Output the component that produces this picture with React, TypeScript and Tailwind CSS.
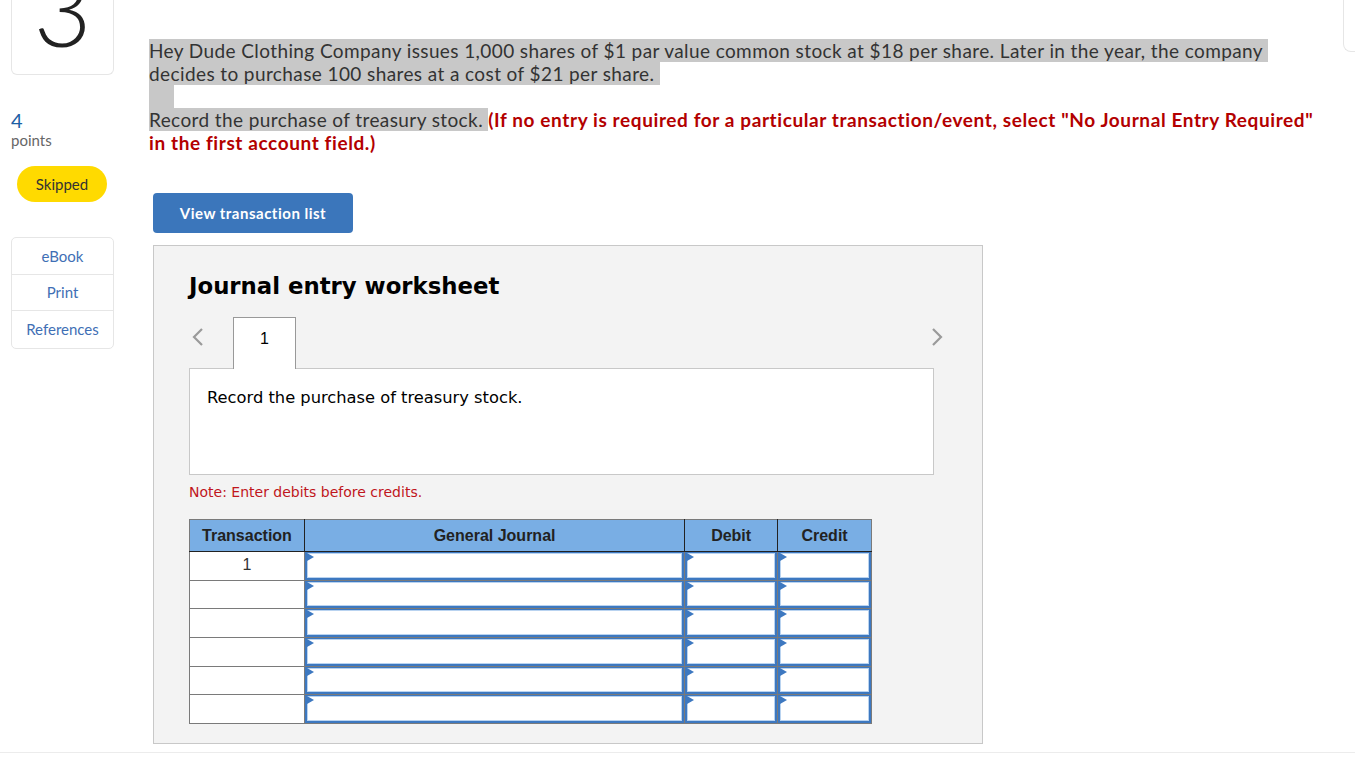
const rows = [1, 2, 3, 4, 5, 6];

function Chevron({ dir }: { dir: "left" | "right" }) {
  return (
    <svg width="14" height="20" viewBox="0 0 14 20" className="text-[#9a9a9a]">
      <polyline
        points={dir === "left" ? "11,2 3,10 11,18" : "3,2 11,10 3,18"}
        fill="none"
        stroke="currentColor"
        strokeWidth="2.2"
      />
    </svg>
  );
}

function InputCell() {
  return (
    <td className="h-[28.67px] border border-[#7a7a7a] p-0">
      <div className="relative h-full border-2 border-t border-[#3d78c0] bg-white shadow-[inset_0_0_0_1px_#b9d3f0]">
        <span className="absolute left-0 top-0 h-0 w-0 border-y-[4px] border-l-[7px] border-y-transparent border-l-[#3d78c0]" />
      </div>
    </td>
  );
}

export default function App() {
  return (
    <div className="h-[759px] w-[1355px] overflow-hidden bg-white font-['Lato',sans-serif] text-[#333]">
      <div className="flex">
        <aside className="ml-[11px] flex w-[103px] shrink-0 flex-col">
          <div className="flex h-[75px] items-end justify-center overflow-hidden rounded-b-[6px] border border-t-0 border-[#e6e6e6] pb-[16px]">
            <span className="text-[100px] font-light leading-none text-[#222]">3</span>
          </div>
          <div className="mt-[34px] text-[20px] leading-[22px] text-[#1d5fa5]">4</div>
          <div className="text-[15px] leading-[18px] text-[#666]">points</div>
          <div className="ml-[6px] mt-[17px] flex h-[36px] w-[90px] items-center justify-center rounded-full bg-[#ffda00] text-[15px] text-[#333]">
            Skipped
          </div>
          <div className="mt-[35px] flex flex-col rounded-[5px] border border-[#e6e6e6] text-[15px] text-[#3f6fb5]">
            <div className="flex h-[37px] items-center justify-center border-b border-[#e6e6e6]">eBook</div>
            <div className="flex h-[36px] items-center justify-center border-b border-[#e6e6e6]">Print</div>
            <div className="flex h-[37px] items-center justify-center">References</div>
          </div>
        </aside>

        <main className="ml-[35px] w-[1194px] shrink-0 pt-[39px]">
          <p className="text-[19px] leading-[23px] tracking-[0.4px] text-[#333]">
            <span className="bg-[#c8c8c8]">
              Hey Dude Clothing Company issues 1,000 shares of $1 par value common stock at $18 per share. Later in the year, the company{"\u00a0"}
              <br />
              decides to purchase 100 shares at a cost of $21 per share.{"\u00a0"}
            </span>
          </p>
          <div className="h-[23px]">
            <span className="inline-block h-[23px] w-[25px] bg-[#c8c8c8]" />
          </div>
          <p className="text-[19px] leading-[23px] tracking-[0.4px]">
            <span className="bg-[#c8c8c8]">Record the purchase of treasury stock. </span>
            <span className="font-bold tracking-[0.6px] text-[#b30000]">
              (If no entry is required for a particular transaction/event, select "No Journal Entry Required"
              <br />
              in the first account field.)
            </span>
          </p>

          <button
            type="button"
            className="ml-[4px] mt-[39px] flex h-[40px] w-[200px] items-center justify-center rounded-[4px] bg-[#3b76bb] text-[15px] font-bold tracking-[0.5px] text-white"
          >
            View transaction list
          </button>

          <section className="ml-[4px] mt-[12px] w-[830px] border border-[#c8c8c8] bg-[#f3f3f3] pb-[19px] pl-[35px] pt-[26px]">
            <h2 className="font-['DejaVu_Sans',sans-serif] text-[22.8px] font-bold leading-[28px] text-black">
              Journal entry worksheet
            </h2>

            <div className="mt-[17px] flex h-[51px] w-[757px] items-center justify-between">
              <div className="flex h-full items-center">
                <span className="ml-[2px] mt-[-12px]">
                  <Chevron dir="left" />
                </span>
                <div className="relative z-10 ml-[28px] flex h-[52px] w-[63px] self-start justify-center border border-b-0 border-[#999] bg-white pt-[9px] font-['Liberation_Sans',sans-serif] text-[16px] text-black">
                  1
                </div>
              </div>
              <span className="mr-[2px] mt-[-12px]">
                <Chevron dir="right" />
              </span>
            </div>

            <div className="h-[107px] w-[745px] border border-[#c8c8c8] bg-white pl-[17px] pt-[17px] font-['DejaVu_Sans',sans-serif] text-[16.3px] text-black">
              Record the purchase of treasury stock.
            </div>

            <p className="mt-[8px] font-['DejaVu_Sans',sans-serif] text-[14px] leading-[18px] text-[#c0161c]">
              Note: Enter debits before credits.
            </p>

            <table className="mt-[18px] w-[683px] border-collapse border border-[#7a7a7a] font-['Liberation_Sans',sans-serif]">
              <thead>
                <tr className="h-[32px] bg-[#79aee4] text-[16px] font-bold text-[#222]">
                  <th className="w-[115px] border-b border-r border-b-[#222] border-r-[#222] font-bold">Transaction</th>
                  <th className="w-[381px] border-b border-r border-b-[#222] border-r-[#222] font-bold">General Journal</th>
                  <th className="w-[93px] border-b border-r border-b-[#222] border-r-[#222] font-bold">Debit</th>
                  <th className="w-[94px] border-b border-b-[#222] font-bold">Credit</th>
                </tr>
              </thead>
              <tbody>
                {rows.map((r) => (
                  <tr key={r}>
                    <td className="h-[28.67px] border border-[#7a7a7a] bg-white pt-[4px] text-center align-top text-[16px] leading-[18px] text-[#333]">
                      {r === 1 ? "1" : ""}
                    </td>
                    <InputCell />
                    <InputCell />
                    <InputCell />
                  </tr>
                ))}
              </tbody>
            </table>
          </section>
        </main>

        <div className="ml-auto h-[52px] w-[30px] shrink-0 rounded-bl-[8px] border-b border-l border-[#e6e6e6]" />
      </div>
      <div className="mt-[8px] border-t border-[#ececec]" />
    </div>
  );
}
